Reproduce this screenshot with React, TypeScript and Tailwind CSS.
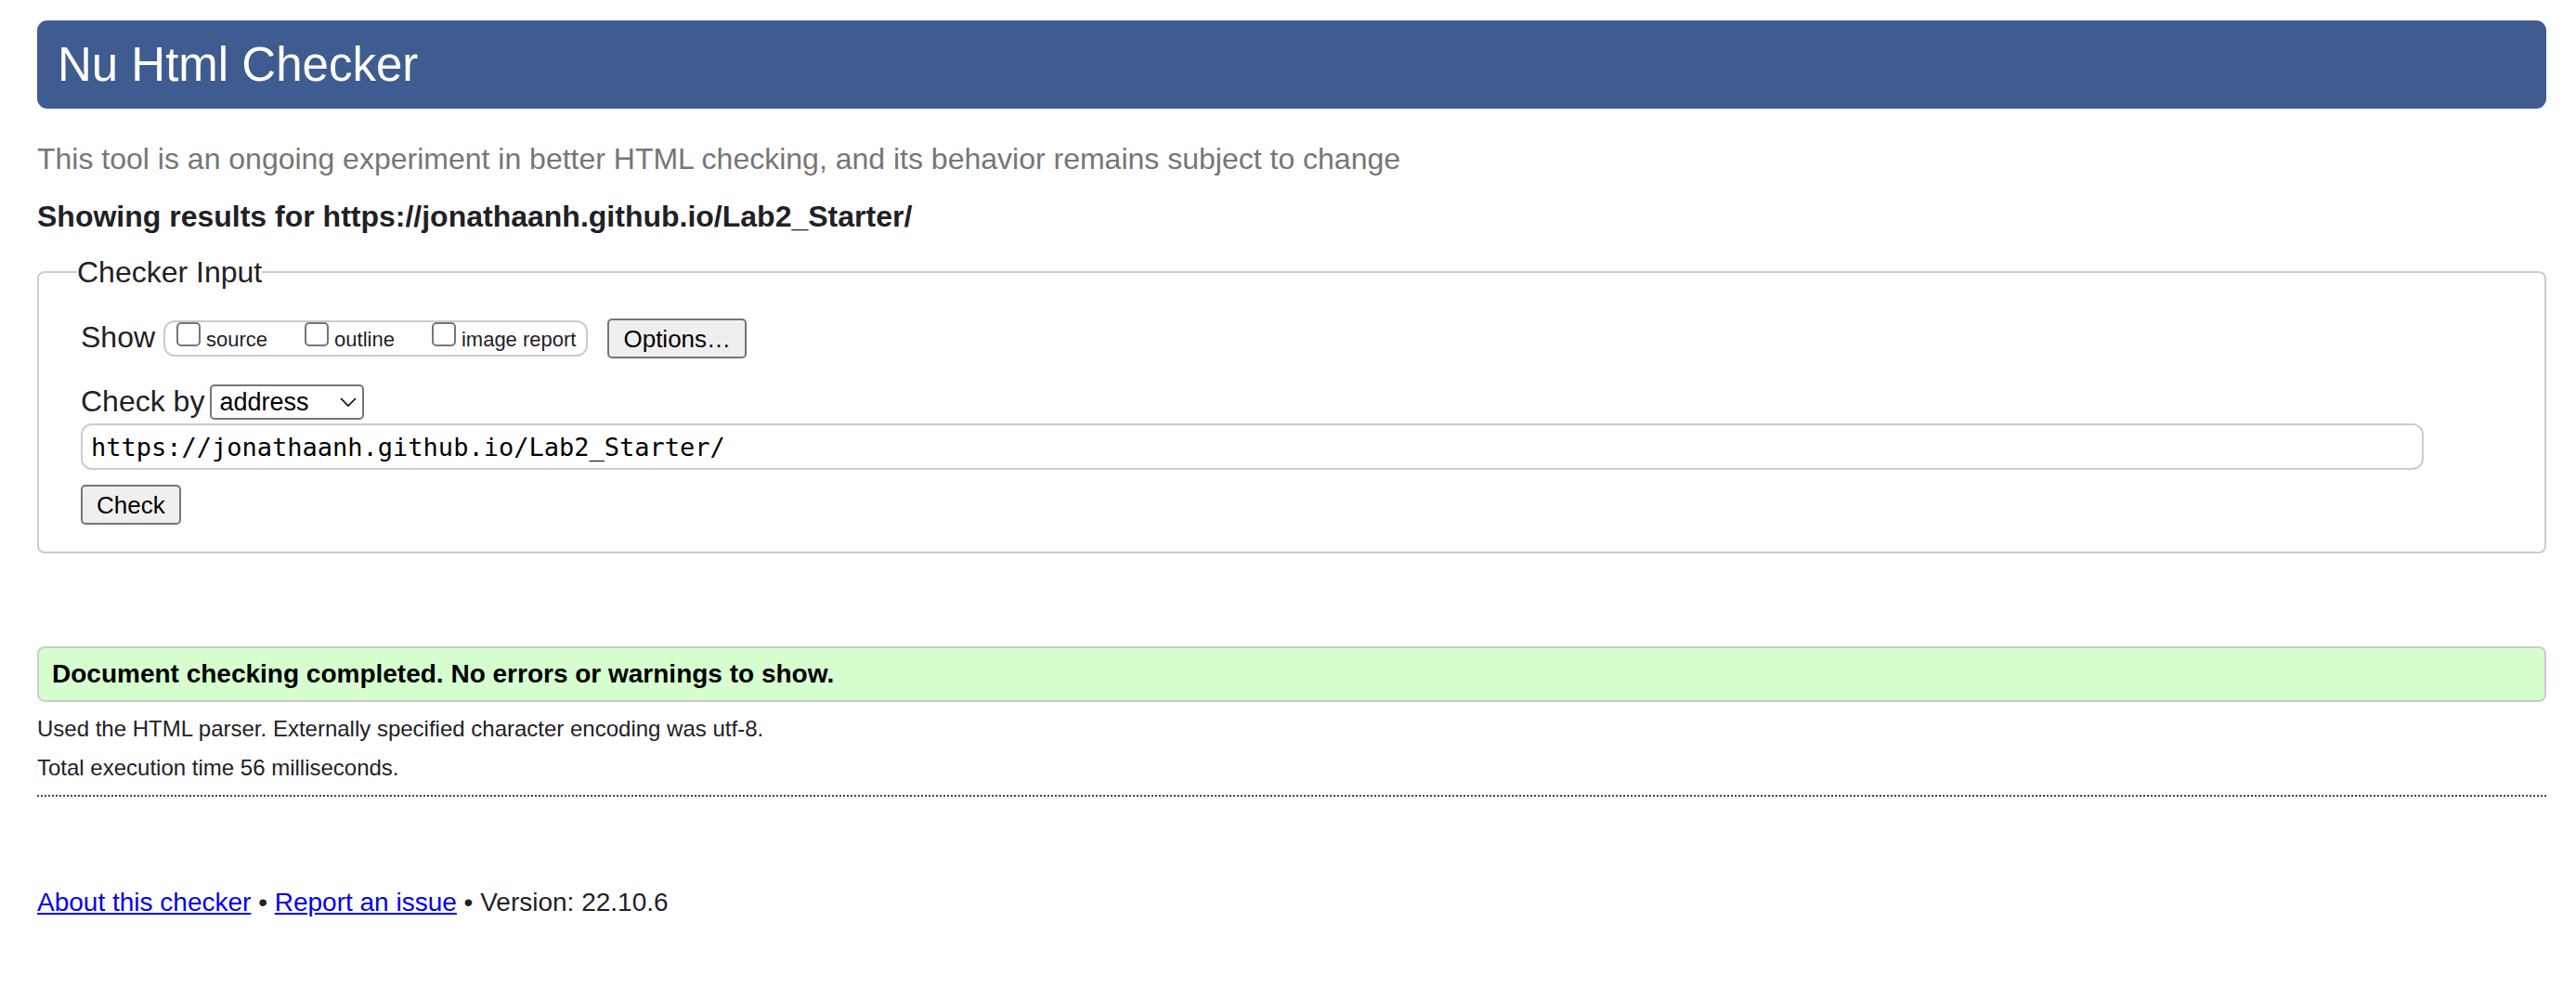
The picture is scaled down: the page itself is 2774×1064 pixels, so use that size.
const outputs = ["source", "outline", "image report"];

const buttonClass =
  "h-[43px] rounded-[5px] border-2 border-[#767676] bg-[#efefef] px-[15px] text-[26px] leading-8 text-black";

function ShowOptions() {
  return (
    <div className="flex items-start">
      <span>Show</span>
      <div className="ml-[9px] mt-[2px] flex h-[39px] items-start gap-10 rounded-xl border-2 border-[#ccc] pl-3 pr-[11px]">
        {outputs.map((name) => (
          <label key={name} className="flex items-baseline gap-[6px] text-[22px] leading-9">
            <input
              type="checkbox"
              className="size-[26px] shrink-0 appearance-none rounded-[5px] border-2 border-[#767676] bg-white checked:bg-[#0075ff]"
            />
            {name}
          </label>
        ))}
      </div>
      <button type="button" className={`ml-[21px] ${buttonClass}`}>
        Options…
      </button>
    </div>
  );
}

function MethodSelect() {
  return (
    <div className="mt-[26px] flex h-10 items-start">
      <label htmlFor="method">Check by</label>
      <div className="ml-[6px] mt-[2px] grid items-center">
        <select
          id="method"
          defaultValue="address"
          className="col-start-1 row-start-1 h-[38px] w-[166px] appearance-none rounded-[5px] border-2 border-[#767676] bg-white pl-2 text-[27px] leading-8 text-black"
        >
          <option value="address">address</option>
          <option value="upload">file upload</option>
          <option value="text">text input</option>
        </select>
        <svg
          viewBox="0 0 18 10"
          className="pointer-events-none col-start-1 row-start-1 mr-2 h-[10px] w-[18px] justify-self-end"
          fill="none"
          stroke="black"
          strokeWidth="1.6"
          aria-hidden="true"
        >
          <path d="M1 1 L9 9 L17 1" />
        </svg>
      </div>
    </div>
  );
}

export default function App() {
  return (
    <div className="bg-white pl-10 pr-8 pt-[22px] font-['Liberation_Sans',Arial,sans-serif] text-[32px] leading-10 text-[#1f2126]">
      <header className="rounded-[11px] bg-[#3f5c91] px-[22px] pb-[17px] pt-[18px]">
        <h1 className="text-[51px] leading-[60px] text-white">Nu Html Checker</h1>
      </header>

      <main>
        <p className="mt-[34px] text-[#767676]">
          This tool is an ongoing experiment in better HTML checking, and its behavior remains subject to change
        </p>
        <h2 className="mt-[22px] font-bold">Showing results for https://jonathaanh.github.io/Lab2_Starter/</h2>

        <form onSubmit={(event) => event.preventDefault()}>
          <fieldset className="mt-[20px] rounded-lg border-2 border-[#ccc] px-[41px] pb-[29px]">
            <legend>Checker Input</legend>
            <div className="pl-1 pt-[30px]">
              <ShowOptions />
              <MethodSelect />
              <div className="mt-1 pr-[89px]">
                <input
                  type="url"
                  aria-label="Address of the page to check"
                  defaultValue="https://jonathaanh.github.io/Lab2_Starter/"
                  className="block h-[50px] w-full rounded-xl border-2 border-[#ccc] bg-white px-[9px] font-['DejaVu_Sans_Mono',monospace] text-[27px] leading-9 text-black"
                />
              </div>
              <button type="submit" className={`mt-4 block ${buttonClass}`}>
                Check
              </button>
            </div>
          </fieldset>
        </form>

        <section aria-label="Results" className="border-b-2 border-dotted border-[#444] pb-2">
          <p className="mt-[100px] rounded-lg border-2 border-[#ccc] bg-[#d6fecf] px-[14px] py-[10px] text-[28px] font-bold leading-9 text-black">
            Document checking completed. No errors or warnings to show.
          </p>
          <div className="mt-2 text-[24px] leading-[42px]">
            <p>Used the HTML parser. Externally specified character encoding was utf-8.</p>
            <p>Total execution time 56 milliseconds.</p>
          </div>
        </section>
      </main>

      <footer className="mt-24 pb-10 text-[28px] leading-9">
        <a href="#about" className="text-[#0000ee] underline">
          About this checker
        </a>{" "}
        •{" "}
        <a href="#issue" className="text-[#0000ee] underline">
          Report an issue
        </a>{" "}
        • Version: 22.10.6
      </footer>
    </div>
  );
}
